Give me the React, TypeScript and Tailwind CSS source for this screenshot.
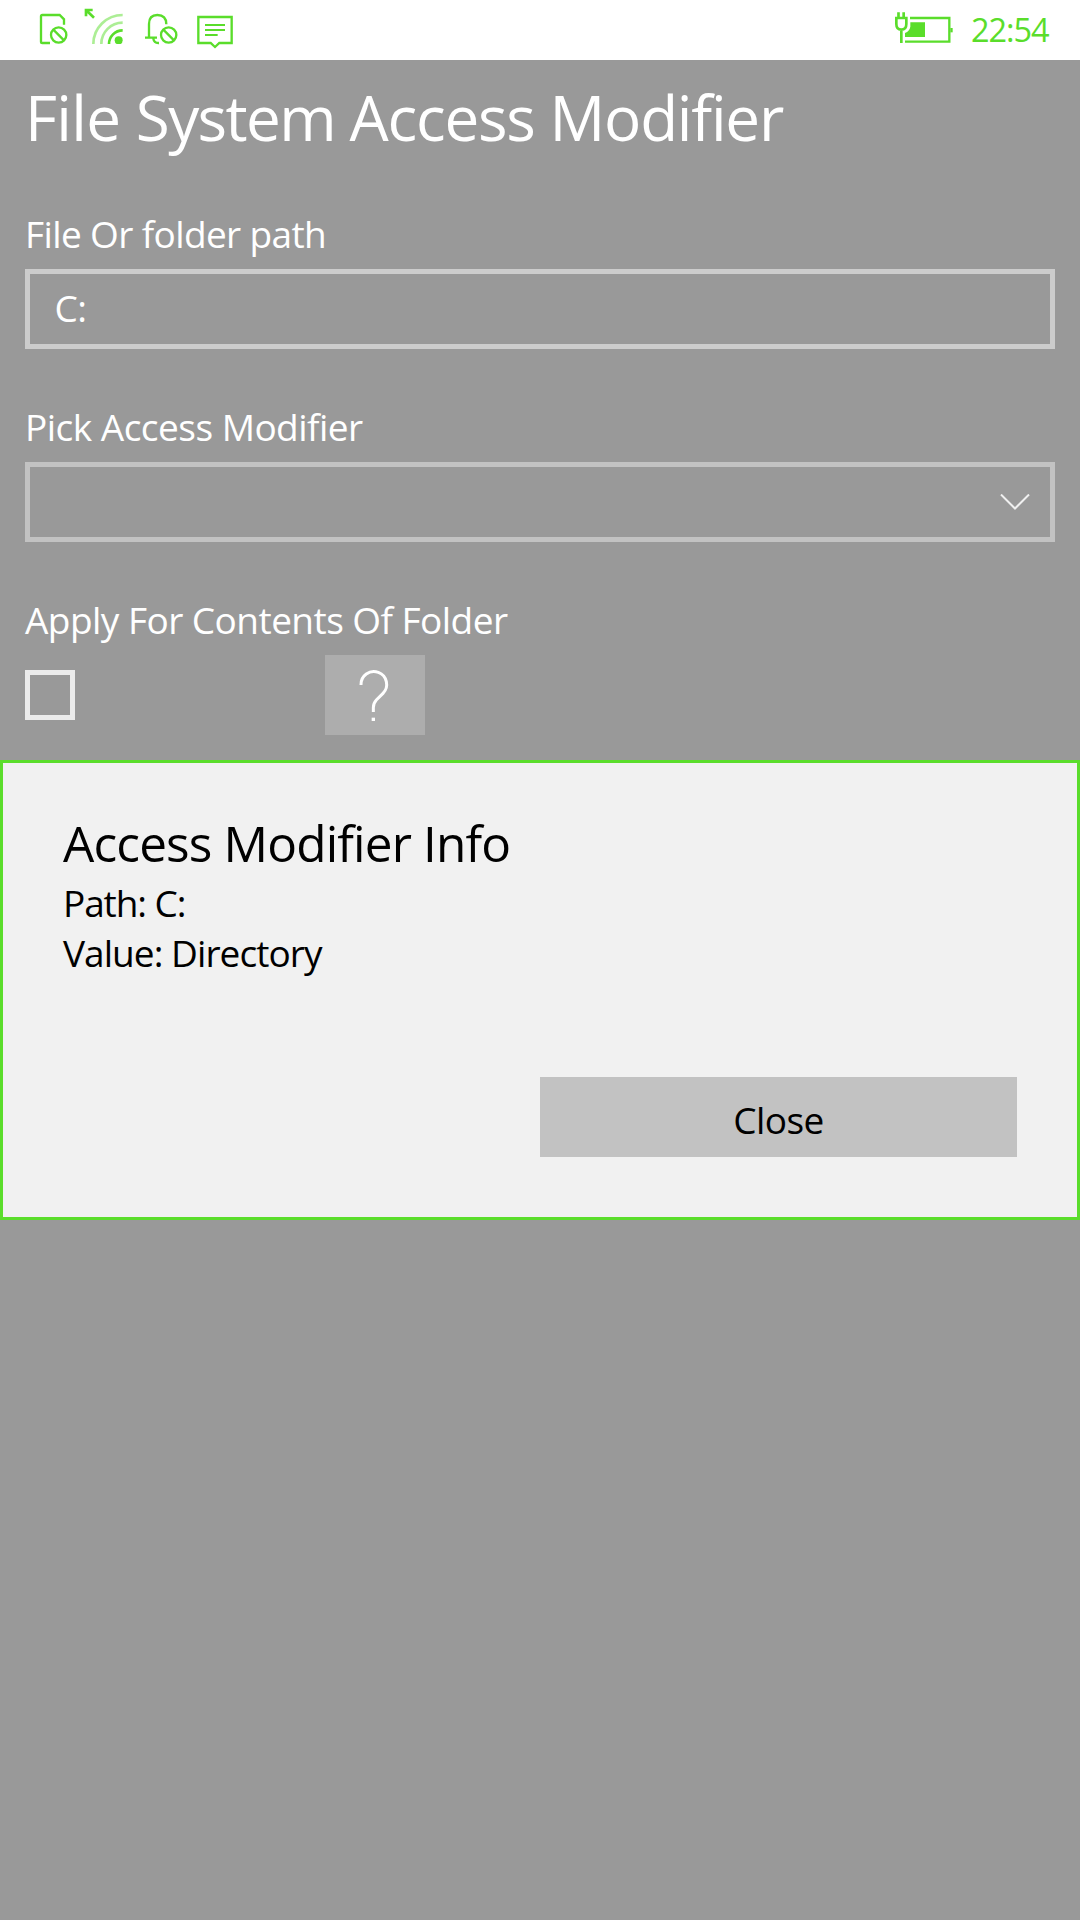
import React from 'react';

function NoSimIcon() {
  return (
    <svg className="ml-[38px] h-[34px] w-[32px]" viewBox="54 39 96 102" fill="none" stroke="#5add2b" strokeWidth="7">
      <path d="M90 129H67q-4 0-4-4V49q0-4 4-4H119L132 58V74" />
      <circle cx="116" cy="105" r="23" />
      <path d="M100 89L132 121" />
    </svg>
  );
}

function SignalIcon() {
  return (
    <svg className="ml-[14px] h-[36px] w-[40px]" viewBox="192 24 120 108" fill="none" stroke="#5add2b">
      <path d="M198 49V30H218M198 30L222 53" strokeWidth="8" />
      <path d="M220 132A88 87 0 0 1 308 45" strokeWidth="8" opacity=".5" />
      <path d="M244 132A64 64 0 0 1 308 68" strokeWidth="8" opacity=".5" />
      <path d="M267 132A41 41 0 0 1 308 91" strokeWidth="8" />
      <circle cx="296" cy="121" r="12" fill="#5add2b" stroke="none" />
    </svg>
  );
}

function BellOffIcon() {
  return (
    <svg className="ml-[21px] h-[34px] w-[34px]" viewBox="375 39 102 102" fill="none" stroke="#5add2b" strokeWidth="7">
      <path d="M375 113H411M387 113V72Q387 45 412 45Q439 45 439 73M400 116Q402 130 417 129" />
      <circle cx="446" cy="105" r="23" />
      <path d="M430 89L462 121" />
    </svg>
  );
}

function MessageIcon() {
  return (
    <svg className="ml-[18px] h-[36px] w-[37px]" viewBox="531 45 111 108" fill="none" stroke="#5add2b" strokeWidth="7">
      <path d="M535 51H635V129H598L585 141L572 129H535Z" />
      <path d="M555 75H615M555 90H615M555 105H593" strokeWidth="6" />
    </svg>
  );
}

function BatteryIcon() {
  return (
    <svg className="h-[36px] w-[60px]" viewBox="42 36 180 108" fill="none" stroke="#5add2b" strokeWidth="7">
      <path d="M90 54H208V125H75" />
      <path d="M211 84H218V97H211Z" fill="#5add2b" stroke="none" />
      <path d="M91 67H135V111H75V99Q89 93 91 80Z" fill="#5add2b" stroke="none" />
      <path d="M55.500 37V52M71 37V52M45 54H83M49 54V72Q49 89 64 89Q79 89 79 72V54M64 89V129" strokeWidth="8" />
    </svg>
  );
}

function StatusBar() {
  return (
    <header className="flex h-[60px] items-start bg-white pr-[30px]">
      <div className="flex grow items-start">
        <div className="mt-[13px]"><NoSimIcon /></div>
        <div className="mt-[8px]"><SignalIcon /></div>
        <div className="mt-[13px]"><BellOffIcon /></div>
        <div className="mt-[15px]"><MessageIcon /></div>
      </div>
      <div className="mt-[12px]"><BatteryIcon /></div>
      <div className="ml-[17px] w-[79px] text-[32.5px] leading-[60px] font-normal tracking-[-1.1px] whitespace-nowrap text-[#5add2b]">22:54</div>
    </header>
  );
}

function Label({ children }: { children: React.ReactNode }) {
  return <div className="h-[60px] text-[37px] leading-[50px] tracking-[-0.62px] whitespace-nowrap">{children}</div>;
}

function InfoDialog() {
  return (
    <section className="mt-[25px] flex h-[460px] flex-col border-[3px] border-[#5add2b] bg-[#f1f1f1] pt-[47px] pr-[60px] pl-[60px] text-black">
      <h2 className="text-[49.5px] leading-[66px] tracking-[-0.85px]">Access Modifier Info</h2>
      <p className="mt-[2px] text-[37px] leading-[50px] tracking-[-1.1px]">Path: C:</p>
      <p className="text-[37px] leading-[50px] tracking-[-0.95px]">Value: Directory</p>
      <button className="mt-[99px] h-[80px] w-[477px] self-end bg-[#c2c2c2] pt-[5px] text-[37px] leading-[75px] tracking-[-0.57px]">Close</button>
    </section>
  );
}

export default function App() {
  return (
    <div className="flex h-[1920px] w-[1080px] flex-col overflow-hidden bg-[#999999] font-['Open_Sans',sans-serif] text-white">
      <StatusBar />
      <main className="px-[25px] pt-[18px]">
        <h1 className="h-[131px] text-[62px] leading-[79px] tracking-[-1.23px] whitespace-nowrap">
          <span className="tracking-[-0.7px]">File </span>
          <span className="tracking-[-1.6px]">System </span>
          Access Modifier
        </h1>
        <Label>File Or folder path</Label>
        <div className="h-[80px] border-[5px] border-[#cccccc] pl-[24.5px] text-[37px] leading-[67px] tracking-[-0.6px]">C:</div>
        <div className="mt-[53px]"><Label><span className="tracking-[-0.52px]">Pick Access Modifier</span></Label></div>
        <div className="flex h-[80px] items-center justify-end border-[5px] border-[#c2c2c2] pr-[20px]">
          <svg className="h-[16px] w-[30px]" viewBox="0 0 30 16" fill="none" stroke="#f0f0f0" strokeWidth="2">
            <path d="M1 .5L15 14.500L29 .5" />
          </svg>
        </div>
        <div className="mt-[53px]"><Label><span className="tracking-[-0.54px]">Apply For Contents Of Folder</span></Label></div>
        <div className="flex h-[80px] items-center">
          <div className="size-[50px] border-[5px] border-[#ebebeb]" />
          <button className="ml-[250px] flex h-[80px] w-[100px] items-center justify-center bg-[#adadad]">
            <svg className="mt-px h-[52px] w-[30px] overflow-visible" viewBox="120 57 90 156" fill="none" stroke="white" strokeWidth="9">
              <path d="M123 102A38.500 38.500 0 1 1 189 127L169 147Q160 157 160 170V183" />
              <path d="M160 200V210" strokeWidth="10" />
            </svg>
          </button>
        </div>
      </main>
      <InfoDialog />
    </div>
  );
}
